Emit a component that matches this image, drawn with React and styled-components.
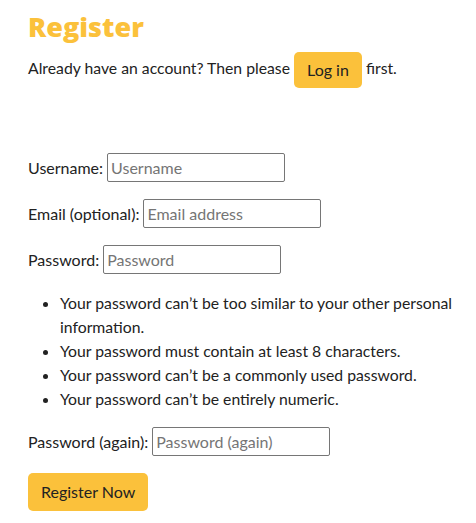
import React from 'react';
import styled, { createGlobalStyle } from 'styled-components';

const GlobalStyle = createGlobalStyle`
	body {
		margin: 0;
		background: #ffffff;
		font-family: 'Lato', 'Liberation Sans', sans-serif;
		color: #222222;
		font-size: 15.75px;
	}
`;

const yellow = '#fbc13b';

const Page = styled.div`
	padding: 8px 8px 8px 28px;
`;

const Title = styled.h1`
	margin: 0;
	font-family: 'Open Sans', sans-serif;
	font-weight: 800;
	font-size: 27px;
	line-height: 38px;
	color: ${yellow};
`;

const Intro = styled.p`
	margin: 4px 0 0;
	line-height: 36px;
`;

const Button = styled.button`
	display: inline-block;
	vertical-align: middle;
	font-family: 'Lato', sans-serif;
	font-size: 16px;
	color: #222222;
	background: ${yellow};
	border: none;
	border-radius: 5px;
	padding: ${props => (props.large ? '9px 13px' : '8px 13px')};
	line-height: 20px;
	cursor: pointer;
`;

const Form = styled.form`
	margin-top: 65px;
	display: flex;
	flex-direction: column;
	align-items: flex-start;
`;

const Field = styled.div`
	display: flex;
	align-items: center;
	gap: 4px;
	margin-bottom: 17px;
`;

const Label = styled.label`
	font-size: 16px;
`;

const Input = styled.input`
	font-family: 'Lato', sans-serif;
	font-size: 16px;
	width: 178px;
	height: 29px;
	box-sizing: border-box;
	padding: 2px 3px;
	border: 1px solid #767676;
	border-radius: 2px;
	&::placeholder {
		color: #757575;
	}
`;

const Rules = styled.ul`
	margin: 0 0 16px;
	padding-left: 32px;
	line-height: 24px;
`;

const Register = () => (
	<Page>
		<GlobalStyle />
		<Title>Register</Title>
		<Intro>
			Already have an account? Then please <Button type="button">Log in</Button> first.
		</Intro>
		<Form onSubmit={e => e.preventDefault()}>
			<Field>
				<Label htmlFor="username">Username:</Label>
				<Input id="username" placeholder="Username" />
			</Field>
			<Field>
				<Label htmlFor="email">Email (optional):</Label>
				<Input id="email" placeholder="Email address" />
			</Field>
			<Field>
				<Label htmlFor="password1">Password:</Label>
				<Input id="password1" type="password" placeholder="Password" />
			</Field>
			<Rules>
				<li>Your password can’t be too similar to your other personal information.</li>
				<li>Your password must contain at least 8 characters.</li>
				<li>Your password can’t be a commonly used password.</li>
				<li>Your password can’t be entirely numeric.</li>
			</Rules>
			<Field>
				<Label htmlFor="password2">Password (again):</Label>
				<Input id="password2" type="password" placeholder="Password (again)" />
			</Field>
			<Button large type="submit">Register Now</Button>
		</Form>
	</Page>
);

export default Register;
